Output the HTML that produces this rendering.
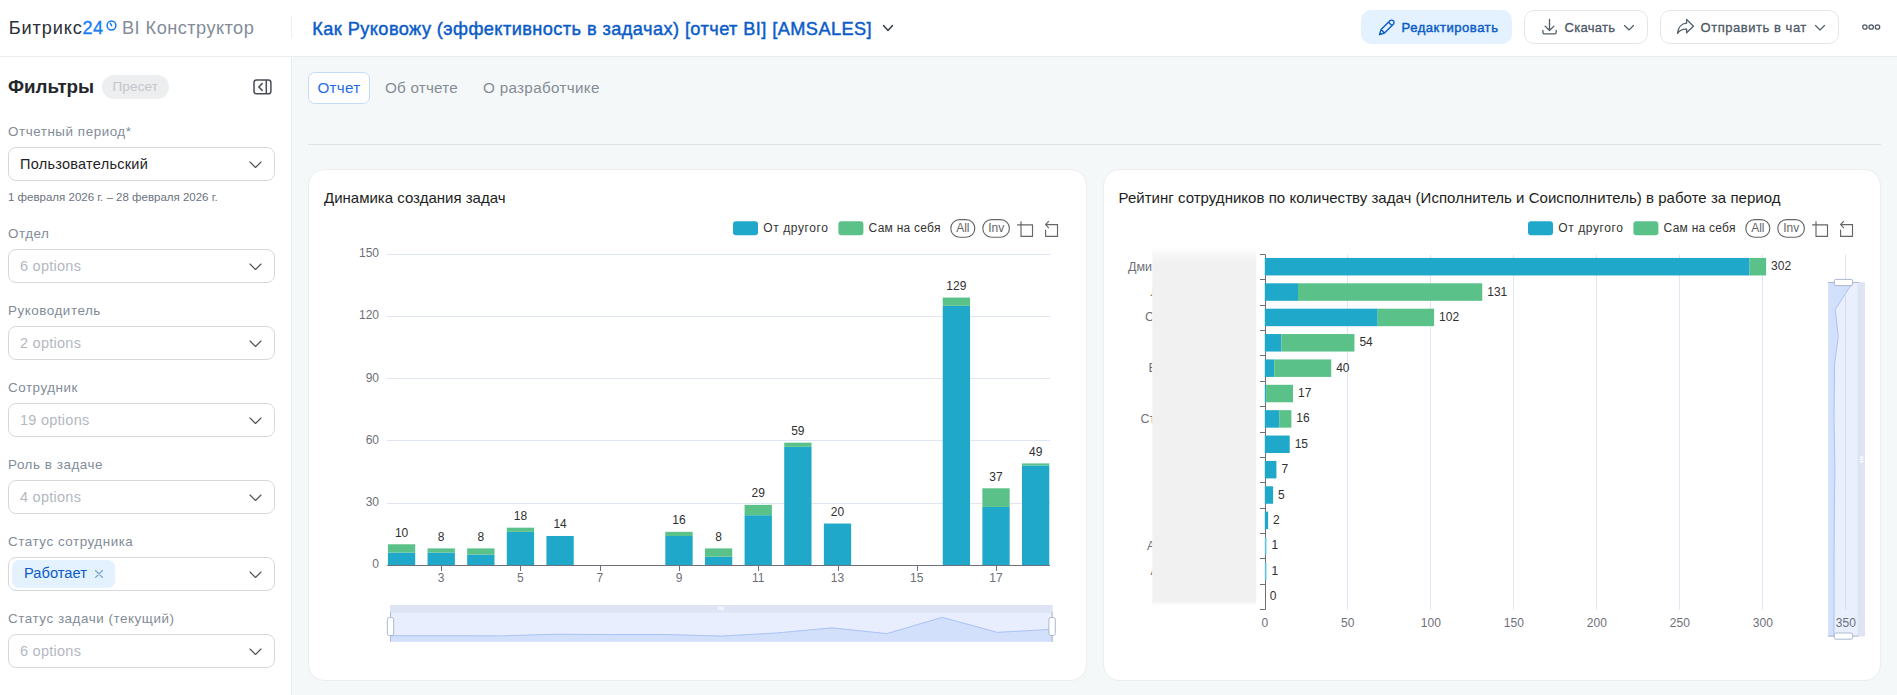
<!DOCTYPE html>
<html><head><meta charset="utf-8"><title>BI</title><style>
*{box-sizing:border-box;margin:0;padding:0}
html,body{width:1897px;height:695px;overflow:hidden;background:#f5f8f9;font-family:"Liberation Sans",sans-serif}
.abs{position:absolute}
#hdr{position:absolute;left:0;top:0;width:1897px;height:57px;background:#fff;border-bottom:1px solid #e9edf0}
#side{position:absolute;left:0;top:57px;width:292px;height:638px;background:#fff;border-right:1px solid #e9edf0}
.t{position:absolute;white-space:nowrap;line-height:1}
.lbl{position:absolute;left:8px;white-space:nowrap;font-size:13.4px;letter-spacing:.55px;color:#828c98;line-height:1;margin-top:.6px}
.sel{position:absolute;left:8px;width:267px;height:34px;border:1px solid #d5d9de;border-radius:8px;background:#fff}
.sel .v{position:absolute;left:11px;top:8.5px;font-size:14.5px;letter-spacing:.26px;line-height:1;color:#b3b8bf;white-space:nowrap}
.sel svg{position:absolute;left:239.8px;top:13.3px}
.card{position:absolute;top:169px;height:512px;width:778px;background:#fff;border:1px solid #ebedee;border-radius:16px}
.btn{position:absolute;top:10px;height:34px;border-radius:10px}
svg text{font-family:"Liberation Sans",sans-serif}
.ax{font-size:12px;fill:#6E7079}
.vl{font-size:12px;fill:#303030}
.lg{font-size:12px;fill:#333}
</style></head><body>
<div id="hdr"></div>
<div id="side"></div>
<!-- header -->
<div class="t" style="left:8.7px;top:19px;font-size:18.2px;letter-spacing:.85px;color:#2b2f36">Битрикс</div>
<div class="t" style="left:82.6px;top:19px;font-size:18.2px;letter-spacing:.3px;color:#157af5;-webkit-text-stroke:.3px #157af5">24</div>
<svg class="abs" style="left:105.5px;top:19.6px" width="11" height="11" viewBox="0 0 11 11"><circle cx="5.5" cy="5.5" r="4.4" fill="none" stroke="#157af5" stroke-width="1.5"/><path d="M5.7 5.6 L4.3 3.4" fill="none" stroke="#157af5" stroke-width="1.5" stroke-linecap="round"/></svg>
<div class="t" style="left:122px;top:19px;font-size:18.2px;letter-spacing:.45px;color:#838c98">BI Конструктор</div>
<div class="abs" style="left:291px;top:16px;width:1px;height:22px;background:#edf0f2"></div>
<div class="t" style="left:312.3px;top:20px;font-size:18.2px;letter-spacing:.42px;color:#0b5cc8;-webkit-text-stroke:.45px #0b5cc8">Как Руковожу (эффективность в задачах) [отчет BI] [AMSALES]</div>
<svg class="abs" style="left:882px;top:24px" width="12" height="9" viewBox="0 0 12 9"><path d="M1.5 1.5 L6 6.5 L10.5 1.5" fill="none" stroke="#3d434b" stroke-width="1.6" stroke-linecap="round" stroke-linejoin="round"/></svg>
<!-- buttons -->
<div class="btn" style="left:1361px;width:151px;background:#e4f1fe"></div>
<svg class="abs" style="left:1378px;top:18px" width="18" height="18" viewBox="0 0 18 18"><path d="M1.5 16.5 L3.1 11.6 L11.9 2.8 a2.4 2.4 0 0 1 3.4 0 l0 0 a2.4 2.4 0 0 1 0 3.4 L6.5 15 Z M3.1 11.6 L6.5 15 M10.5 4.2 L13.9 7.6" fill="none" stroke="#0b5cc8" stroke-width="1.4" stroke-linejoin="round" stroke-linecap="round"/></svg>
<div class="t" style="left:1401.5px;top:20.9px;font-size:13px;letter-spacing:.55px;color:#0b5cc8;-webkit-text-stroke:.45px #0b5cc8">Редактировать</div>
<div class="btn" style="left:1524px;width:124px;background:#fff;border:1px solid #e3e6e9"></div>
<svg class="abs" style="left:1541px;top:18px" width="17" height="18" viewBox="0 0 17 18"><path d="M8.5 1.3 V12.3 M4.1 8.1 L8.5 12.5 L12.9 8.1 M1.9 12.4 V14.3 a1.6 1.6 0 0 0 1.6 1.6 H13.6 a1.6 1.6 0 0 0 1.6 -1.6 V12.4" fill="none" stroke="#525c69" stroke-width="1.3" stroke-linecap="round" stroke-linejoin="round"/></svg>
<div class="t" style="left:1564.5px;top:20.9px;font-size:13px;letter-spacing:.3px;color:#4d5866;-webkit-text-stroke:.3px #4d5866">Скачать</div>
<svg class="abs" style="left:1623px;top:24px" width="12" height="8" viewBox="0 0 12 8"><path d="M1.5 1.5 L6 6 L10.5 1.5" fill="none" stroke="#525c69" stroke-width="1.15" stroke-linecap="round" stroke-linejoin="round"/></svg>
<div class="btn" style="left:1660px;width:179px;background:#fff;border:1px solid #e3e6e9"></div>
<svg class="abs" style="left:1676px;top:18px" width="19" height="18" viewBox="0 0 19 18"><path d="M10.6 1.4 L17.4 8.2 L10.6 14.8 V11.2 C6.6 11 3.6 12.2 1.5 15.4 C2 10 5.2 5.6 10.6 5.2 Z" fill="none" stroke="#525c69" stroke-width="1.3" stroke-linejoin="round"/></svg>
<div class="t" style="left:1700.5px;top:20.9px;font-size:13px;letter-spacing:.54px;color:#4d5866;-webkit-text-stroke:.3px #4d5866">Отправить в чат</div>
<svg class="abs" style="left:1814px;top:24px" width="12" height="8" viewBox="0 0 12 8"><path d="M1.5 1.5 L6 6 L10.5 1.5" fill="none" stroke="#525c69" stroke-width="1.15" stroke-linecap="round" stroke-linejoin="round"/></svg>
<svg class="abs" style="left:1861px;top:22.9px" width="20" height="8" viewBox="0 0 20 8"><g fill="none" stroke="#525c69" stroke-width="1.3"><circle cx="3.9" cy="4" r="2.2"/><circle cx="10.2" cy="4" r="2.2"/><circle cx="16.5" cy="4" r="2.2"/></g></svg>
<!-- sidebar -->
<div class="t" style="left:8px;top:77.7px;font-size:18.8px;font-weight:700;color:#23262b">Фильтры</div>
<div class="abs" style="left:102px;top:75px;width:67px;height:24px;border-radius:12px;background:#eceef0"></div>
<div class="t" style="left:112.5px;top:80px;font-size:13.5px;letter-spacing:.15px;color:#c3c7cc">Пресет</div>
<svg class="abs" style="left:252.6px;top:79px" width="20" height="16" viewBox="0 0 20 16"><rect x="1" y="1" width="16.9" height="13.8" rx="2.6" fill="none" stroke="#474d57" stroke-width="1.5"/><path d="M13.3 1 V15" stroke="#474d57" stroke-width="1.5"/><path d="M9.2 4.6 L5.8 8 L9.2 11.4" fill="none" stroke="#474d57" stroke-width="1.5" stroke-linecap="round" stroke-linejoin="round"/></svg>
<div class="lbl" style="top:124px">Отчетный период*</div>
<div class="sel" style="top:147px"><span class="v" style="color:#1f2328">Пользовательский</span><svg width="13" height="8" viewBox="0 0 13 8"><path d="M1 1 L6.5 6.5 L12 1" fill="none" stroke="#50555c" stroke-width="1.15" stroke-linecap="round" stroke-linejoin="round"/></svg></div>
<div class="t" style="left:8px;top:192px;font-size:11.5px;color:#6b7380">1 февраля 2026 г. – 28 февраля 2026 г.</div>
<div class="lbl" style="top:226px">Отдел</div>
<div class="sel" style="top:249px"><span class="v">6 options</span><svg width="13" height="8" viewBox="0 0 13 8"><path d="M1 1 L6.5 6.5 L12 1" fill="none" stroke="#50555c" stroke-width="1.15" stroke-linecap="round" stroke-linejoin="round"/></svg></div>
<div class="lbl" style="top:303px">Руководитель</div>
<div class="sel" style="top:326px"><span class="v">2 options</span><svg width="13" height="8" viewBox="0 0 13 8"><path d="M1 1 L6.5 6.5 L12 1" fill="none" stroke="#50555c" stroke-width="1.15" stroke-linecap="round" stroke-linejoin="round"/></svg></div>
<div class="lbl" style="top:380px">Сотрудник</div>
<div class="sel" style="top:403px"><span class="v">19 options</span><svg width="13" height="8" viewBox="0 0 13 8"><path d="M1 1 L6.5 6.5 L12 1" fill="none" stroke="#50555c" stroke-width="1.15" stroke-linecap="round" stroke-linejoin="round"/></svg></div>
<div class="lbl" style="top:457px">Роль в задаче</div>
<div class="sel" style="top:480px"><span class="v">4 options</span><svg width="13" height="8" viewBox="0 0 13 8"><path d="M1 1 L6.5 6.5 L12 1" fill="none" stroke="#50555c" stroke-width="1.15" stroke-linecap="round" stroke-linejoin="round"/></svg></div>
<div class="lbl" style="top:534px">Статус сотрудника</div>
<div class="sel" style="top:557px"><span class="v"></span><svg width="13" height="8" viewBox="0 0 13 8"><path d="M1 1 L6.5 6.5 L12 1" fill="none" stroke="#50555c" stroke-width="1.15" stroke-linecap="round" stroke-linejoin="round"/></svg></div>
<div class="abs" style="left:12px;top:560px;width:103px;height:28px;border-radius:7px;background:#e4f1fe"></div>
<div class="t" style="left:24px;top:566px;font-size:14.7px;color:#0b5cc8">Работает</div>
<svg class="abs" style="left:94px;top:569px" width="10" height="10" viewBox="0 0 10 10"><path d="M1.5 1.5 L8.5 8.5 M8.5 1.5 L1.5 8.5" stroke="#74a3cc" stroke-width="1.1" stroke-linecap="round"/></svg>
<div class="lbl" style="top:611px">Статус задачи (текущий)</div>
<div class="sel" style="top:634px"><span class="v">6 options</span><svg width="13" height="8" viewBox="0 0 13 8"><path d="M1 1 L6.5 6.5 L12 1" fill="none" stroke="#50555c" stroke-width="1.15" stroke-linecap="round" stroke-linejoin="round"/></svg></div>
<!-- tabs -->
<div class="abs" style="left:308px;top:72px;width:62px;height:32px;border:1px solid #c3dcfb;border-radius:7px;background:#fff"></div>
<div class="t" style="left:317.5px;top:80px;font-size:15.2px;letter-spacing:.28px;color:#1f6be8">Отчет</div>
<div class="t" style="left:385px;top:80px;font-size:15.2px;letter-spacing:.22px;color:#858c96">Об отчете</div>
<div class="t" style="left:483px;top:80px;font-size:15.2px;letter-spacing:.33px;color:#858c96">О разработчике</div>
<div class="abs" style="left:308px;top:144px;width:1573px;height:1px;background:#dfe3e7"></div>
<!-- cards -->
<div class="card" style="left:308px;width:779px"></div>
<div class="card" style="left:1103px"></div>
<div class="t" style="left:324px;top:190px;font-size:15px;color:#1c1e21">Динамика создания задач</div>
<div class="t" style="left:1118.5px;top:190px;font-size:15px;letter-spacing:.03px;color:#1c1e21">Рейтинг сотрудников по количеству задач (Исполнитель и Соисполнитель) в работе за период</div>
<svg class="abs" style="left:0;top:0" width="1897" height="695" viewBox="0 0 1897 695">
<defs><filter id="bl" x="-10%" y="-10%" width="120%" height="120%"><feGaussianBlur stdDeviation="3"/></filter>
<clipPath id="nc"><rect x="1100" y="240" width="52.3" height="380"/></clipPath>
<linearGradient id="bg1" x1="0" y1="0" x2="0" y2="1"><stop offset="0" stop-color="#f1f1f2" stop-opacity="0"/><stop offset="0.045" stop-color="#f1f1f2" stop-opacity="1"/><stop offset="0.985" stop-color="#f1f1f2" stop-opacity="1"/><stop offset="1" stop-color="#f1f1f2" stop-opacity="0"/></linearGradient></defs>
<line x1="387.2" y1="503.5" x2="1050.0" y2="503.5" stroke="#E0E6F1" stroke-width="1"/>
<line x1="387.2" y1="440.5" x2="1050.0" y2="440.5" stroke="#E0E6F1" stroke-width="1"/>
<line x1="387.2" y1="378.5" x2="1050.0" y2="378.5" stroke="#E0E6F1" stroke-width="1"/>
<line x1="387.2" y1="316.5" x2="1050.0" y2="316.5" stroke="#E0E6F1" stroke-width="1"/>
<line x1="387.2" y1="254.5" x2="1050.0" y2="254.5" stroke="#E0E6F1" stroke-width="1"/>
<text x="379" y="568" text-anchor="end" class="ax">0</text>
<text x="379" y="506" text-anchor="end" class="ax">30</text>
<text x="379" y="444" text-anchor="end" class="ax">60</text>
<text x="379" y="382" text-anchor="end" class="ax">90</text>
<text x="379" y="319" text-anchor="end" class="ax">120</text>
<text x="379" y="257" text-anchor="end" class="ax">150</text>
<rect x="387.92" y="552.56" width="27.3" height="12.44" fill="#1FA8C9"/>
<rect x="387.92" y="544.27" width="27.3" height="8.29" fill="#5AC189"/>
<text x="401.57" y="536.67" text-anchor="middle" class="vl">10</text>
<rect x="427.55" y="552.56" width="27.3" height="12.44" fill="#1FA8C9"/>
<rect x="427.55" y="548.41" width="27.3" height="4.15" fill="#5AC189"/>
<text x="441.2" y="540.81" text-anchor="middle" class="vl">8</text>
<rect x="467.18" y="554.63" width="27.3" height="10.37" fill="#1FA8C9"/>
<rect x="467.18" y="548.41" width="27.3" height="6.22" fill="#5AC189"/>
<text x="480.83" y="540.81" text-anchor="middle" class="vl">8</text>
<rect x="506.81" y="531.83" width="27.3" height="33.17" fill="#1FA8C9"/>
<rect x="506.81" y="527.68" width="27.3" height="4.15" fill="#5AC189"/>
<text x="520.46" y="520.08" text-anchor="middle" class="vl">18</text>
<rect x="546.44" y="535.97" width="27.3" height="29.03" fill="#1FA8C9"/>
<text x="560.09" y="528.37" text-anchor="middle" class="vl">14</text>
<rect x="665.33" y="535.97" width="27.3" height="29.03" fill="#1FA8C9"/>
<rect x="665.33" y="531.83" width="27.3" height="4.15" fill="#5AC189"/>
<text x="678.98" y="524.23" text-anchor="middle" class="vl">16</text>
<rect x="704.96" y="556.71" width="27.3" height="8.29" fill="#1FA8C9"/>
<rect x="704.96" y="548.41" width="27.3" height="8.29" fill="#5AC189"/>
<text x="718.61" y="540.81" text-anchor="middle" class="vl">8</text>
<rect x="744.59" y="515.24" width="27.3" height="49.76" fill="#1FA8C9"/>
<rect x="744.59" y="504.87" width="27.3" height="10.37" fill="#5AC189"/>
<text x="758.24" y="497.27" text-anchor="middle" class="vl">29</text>
<rect x="784.22" y="446.82" width="27.3" height="118.18" fill="#1FA8C9"/>
<rect x="784.22" y="442.67" width="27.3" height="4.15" fill="#5AC189"/>
<text x="797.87" y="435.07" text-anchor="middle" class="vl">59</text>
<rect x="823.85" y="523.53" width="27.3" height="41.47" fill="#1FA8C9"/>
<text x="837.5" y="515.93" text-anchor="middle" class="vl">20</text>
<rect x="942.74" y="305.83" width="27.3" height="259.17" fill="#1FA8C9"/>
<rect x="942.74" y="297.54" width="27.3" height="8.29" fill="#5AC189"/>
<text x="956.39" y="289.94" text-anchor="middle" class="vl">129</text>
<rect x="982.37" y="506.95" width="27.3" height="58.05" fill="#1FA8C9"/>
<rect x="982.37" y="488.29" width="27.3" height="18.66" fill="#5AC189"/>
<text x="996.02" y="480.69" text-anchor="middle" class="vl">37</text>
<rect x="1022" y="465.48" width="27.3" height="99.52" fill="#1FA8C9"/>
<rect x="1022" y="463.41" width="27.3" height="2.07" fill="#5AC189"/>
<text x="1035.65" y="455.81" text-anchor="middle" class="vl">49</text>
<line x1="387.2" y1="565.5" x2="1050.0" y2="565.5" stroke="#6E7079" stroke-width="1"/>
<line x1="441.5" y1="565.5" x2="441.5" y2="571" stroke="#6E7079" stroke-width="1"/>
<text x="441.2" y="582" text-anchor="middle" class="ax">3</text>
<line x1="520.5" y1="565.5" x2="520.5" y2="571" stroke="#6E7079" stroke-width="1"/>
<text x="520.46" y="582" text-anchor="middle" class="ax">5</text>
<line x1="600.5" y1="565.5" x2="600.5" y2="571" stroke="#6E7079" stroke-width="1"/>
<text x="599.72" y="582" text-anchor="middle" class="ax">7</text>
<line x1="679.5" y1="565.5" x2="679.5" y2="571" stroke="#6E7079" stroke-width="1"/>
<text x="678.98" y="582" text-anchor="middle" class="ax">9</text>
<line x1="758.5" y1="565.5" x2="758.5" y2="571" stroke="#6E7079" stroke-width="1"/>
<text x="758.24" y="582" text-anchor="middle" class="ax">11</text>
<line x1="838.5" y1="565.5" x2="838.5" y2="571" stroke="#6E7079" stroke-width="1"/>
<text x="837.5" y="582" text-anchor="middle" class="ax">13</text>
<line x1="917.5" y1="565.5" x2="917.5" y2="571" stroke="#6E7079" stroke-width="1"/>
<text x="916.76" y="582" text-anchor="middle" class="ax">15</text>
<line x1="996.5" y1="565.5" x2="996.5" y2="571" stroke="#6E7079" stroke-width="1"/>
<text x="996.02" y="582" text-anchor="middle" class="ax">17</text>
<rect x="390.0" y="605" width="662.6" height="6.7" fill="#DEE4F3"/>
<rect x="390.0" y="611.7" width="662.6" height="30" fill="#E8EEFD"/>
<polygon points="390.0,641.7 390,635.77 445.22,635.77 500.43,635.92 555.65,634.22 610.87,634.53 666.08,634.53 721.3,636.08 776.52,632.98 831.73,627.86 886.95,633.6 942.17,617.33 997.38,632.36 1052.6,629.26 1052.6,641.7" fill="#D3E0FB"/>
<polyline points="390,635.77 445.22,635.77 500.43,635.92 555.65,634.22 610.87,634.53 666.08,634.53 721.3,636.08 776.52,632.98 831.73,627.86 886.95,633.6 942.17,617.33 997.38,632.36 1052.6,629.26" fill="none" stroke="#A9C2F8" stroke-width="1"/>
<line x1="390.0" y1="612" x2="1052.6" y2="612" stroke="#D6DEF0" stroke-width="1"/>
<line x1="390.5" y1="611.7" x2="390.5" y2="641.7" stroke="#ACB8D1" stroke-width="1"/>
<rect x="387.3" y="617.5" width="6.4" height="18" rx="2" fill="#fff" stroke="#ACB8D1" stroke-width="1"/>
<line x1="1052.1" y1="611.7" x2="1052.1" y2="641.7" stroke="#ACB8D1" stroke-width="1"/>
<rect x="1048.9" y="617.5" width="6.4" height="18" rx="2" fill="#fff" stroke="#ACB8D1" stroke-width="1"/>
<rect x="718" y="606.7" width="1.3" height="3.4" fill="#fff"/>
<rect x="720.3" y="606.7" width="1.3" height="3.4" fill="#fff"/>
<rect x="722.6" y="606.7" width="1.3" height="3.4" fill="#fff"/>
<rect x="733" y="221.3" width="25" height="14" rx="3" fill="#1FA8C9"/>
<text x="763.3" y="232.3" class="lg" textLength="64.6" lengthAdjust="spacing">От другого</text>
<rect x="838.4" y="221.3" width="25" height="14" rx="3" fill="#5AC189"/>
<text x="868.6" y="232.3" class="lg" textLength="71.8" lengthAdjust="spacing">Сам на себя</text>
<rect x="950.8" y="219.6" width="24" height="17.6" rx="8.8" fill="#fff" stroke="#666" stroke-width="1.15"/>
<text x="962.8" y="232" text-anchor="middle" class="lg" style="fill:#666">All</text>
<rect x="982.8" y="219.6" width="26.6" height="17.6" rx="8.8" fill="#fff" stroke="#666" stroke-width="1.15"/>
<text x="996.2" y="232" text-anchor="middle" class="lg" style="fill:#666">Inv</text>
<path d="M1021 221.3 V236.3 H1032.5 V224.9 H1017.1" fill="none" stroke="#666" stroke-width="1.15"/>
<path d="M1048.8 221.2 L1045.6 224.6 L1048.8 228.1 M1045.6 224.6 H1057.5 V236.3 H1045.6 V229.8" fill="none" stroke="#666" stroke-width="1.15"/>
<line x1="1347.5" y1="254.5" x2="1347.5" y2="609.7" stroke="#E0E6F1" stroke-width="1"/>
<line x1="1430.5" y1="254.5" x2="1430.5" y2="609.7" stroke="#E0E6F1" stroke-width="1"/>
<line x1="1513.5" y1="254.5" x2="1513.5" y2="609.7" stroke="#E0E6F1" stroke-width="1"/>
<line x1="1596.5" y1="254.5" x2="1596.5" y2="609.7" stroke="#E0E6F1" stroke-width="1"/>
<line x1="1679.5" y1="254.5" x2="1679.5" y2="609.7" stroke="#E0E6F1" stroke-width="1"/>
<line x1="1762.5" y1="254.5" x2="1762.5" y2="609.7" stroke="#E0E6F1" stroke-width="1"/>
<line x1="1845.5" y1="254.5" x2="1845.5" y2="609.7" stroke="#E0E6F1" stroke-width="1"/>
<rect x="1858.7" y="282.2" width="6.3" height="354.2" fill="#DEE4F3"/>
<rect x="1828.2" y="282.2" width="30.5" height="354.2" fill="#E8EEFD" fill-opacity="0.92"/>
<polygon points="1828.2,282.2 1852.98,282.2 1835.22,309.45 1838.29,336.69 1834.57,363.94 1834.31,391.18 1833.98,418.43 1834.51,445.68 1834.9,472.92 1834.38,500.17 1834.25,527.42 1834.05,554.66 1833.98,581.91 1833.98,609.15 1833.92,636.4 1828.2,636.4" fill="#D3E0FB"/>
<polyline points="1852.98,282.2 1835.22,309.45 1838.29,336.69 1834.57,363.94 1834.31,391.18 1833.98,418.43 1834.51,445.68 1834.9,472.92 1834.38,500.17 1834.25,527.42 1834.05,554.66 1833.98,581.91 1833.98,609.15 1833.92,636.4" fill="none" stroke="#A9C2F8" stroke-width="1"/>
<line x1="1845.5" y1="282.2" x2="1845.5" y2="609.7" stroke="#D2DCF5" stroke-width="1"/>
<line x1="1858.2" y1="282.2" x2="1858.2" y2="636.4" stroke="#D6DEF0" stroke-width="1"/>
<line x1="1828.2" y1="282.5" x2="1858.7" y2="282.5" stroke="#ACB8D1" stroke-width="1"/>
<rect x="1834.3" y="279.4" width="18.3" height="6.2" rx="1.5" fill="#fff" stroke="#ACB8D1" stroke-width="1"/>
<line x1="1828.2" y1="636.1" x2="1858.7" y2="636.1" stroke="#ACB8D1" stroke-width="1"/>
<rect x="1834.3" y="633" width="18.3" height="6.2" rx="1.5" fill="#fff" stroke="#ACB8D1" stroke-width="1"/>
<rect x="1860" y="456.5" width="3.4" height="1.3" fill="#fff"/>
<rect x="1860" y="458.8" width="3.4" height="1.3" fill="#fff"/>
<rect x="1860" y="461.1" width="3.4" height="1.3" fill="#fff"/>
<text x="1264.8" y="627" text-anchor="middle" class="ax">0</text>
<text x="1347.8" y="627" text-anchor="middle" class="ax">50</text>
<text x="1430.8" y="627" text-anchor="middle" class="ax">100</text>
<text x="1513.8" y="627" text-anchor="middle" class="ax">150</text>
<text x="1596.8" y="627" text-anchor="middle" class="ax">200</text>
<text x="1679.8" y="627" text-anchor="middle" class="ax">250</text>
<text x="1762.8" y="627" text-anchor="middle" class="ax">300</text>
<text x="1845.8" y="627" text-anchor="middle" class="ax">350</text>
<line x1="1265.5" y1="254.5" x2="1265.5" y2="609.7" stroke="#6E7079" stroke-width="1"/>
<line x1="1260" y1="254.5" x2="1265.5" y2="254.5" stroke="#6E7079" stroke-width="1"/>
<line x1="1260" y1="279.5" x2="1265.5" y2="279.5" stroke="#6E7079" stroke-width="1"/>
<line x1="1260" y1="305.5" x2="1265.5" y2="305.5" stroke="#6E7079" stroke-width="1"/>
<line x1="1260" y1="330.5" x2="1265.5" y2="330.5" stroke="#6E7079" stroke-width="1"/>
<line x1="1260" y1="355.5" x2="1265.5" y2="355.5" stroke="#6E7079" stroke-width="1"/>
<line x1="1260" y1="381.5" x2="1265.5" y2="381.5" stroke="#6E7079" stroke-width="1"/>
<line x1="1260" y1="406.5" x2="1265.5" y2="406.5" stroke="#6E7079" stroke-width="1"/>
<line x1="1260" y1="432.5" x2="1265.5" y2="432.5" stroke="#6E7079" stroke-width="1"/>
<line x1="1260" y1="457.5" x2="1265.5" y2="457.5" stroke="#6E7079" stroke-width="1"/>
<line x1="1260" y1="482.5" x2="1265.5" y2="482.5" stroke="#6E7079" stroke-width="1"/>
<line x1="1260" y1="508.5" x2="1265.5" y2="508.5" stroke="#6E7079" stroke-width="1"/>
<line x1="1260" y1="533.5" x2="1265.5" y2="533.5" stroke="#6E7079" stroke-width="1"/>
<line x1="1260" y1="558.5" x2="1265.5" y2="558.5" stroke="#6E7079" stroke-width="1"/>
<line x1="1260" y1="584.5" x2="1265.5" y2="584.5" stroke="#6E7079" stroke-width="1"/>
<line x1="1260" y1="609.5" x2="1265.5" y2="609.5" stroke="#6E7079" stroke-width="1"/>
<rect x="1264.8" y="257.94" width="484.72" height="17.5" fill="#1FA8C9"/>
<rect x="1749.52" y="257.94" width="16.6" height="17.5" fill="#5AC189"/>
<text x="1771.12" y="270.19" class="vl">302</text>
<rect x="1264.8" y="283.31" width="33.2" height="17.5" fill="#1FA8C9"/>
<rect x="1298" y="283.31" width="184.26" height="17.5" fill="#5AC189"/>
<text x="1487.26" y="295.56" class="vl">131</text>
<rect x="1264.8" y="308.68" width="112.88" height="17.5" fill="#1FA8C9"/>
<rect x="1377.68" y="308.68" width="56.44" height="17.5" fill="#5AC189"/>
<text x="1439.12" y="320.93" class="vl">102</text>
<rect x="1264.8" y="334.05" width="16.6" height="17.5" fill="#1FA8C9"/>
<rect x="1281.4" y="334.05" width="73.04" height="17.5" fill="#5AC189"/>
<text x="1359.44" y="346.3" class="vl">54</text>
<rect x="1264.8" y="359.42" width="9.46" height="17.5" fill="#1FA8C9"/>
<rect x="1274.26" y="359.42" width="56.94" height="17.5" fill="#5AC189"/>
<text x="1336.2" y="371.67" class="vl">40</text>
<rect x="1264.8" y="384.79" width="1.33" height="17.5" fill="#1FA8C9"/>
<rect x="1266.13" y="384.79" width="26.89" height="17.5" fill="#5AC189"/>
<text x="1298.02" y="397.04" class="vl">17</text>
<rect x="1264.8" y="410.16" width="14.44" height="17.5" fill="#1FA8C9"/>
<rect x="1279.24" y="410.16" width="12.12" height="17.5" fill="#5AC189"/>
<text x="1296.36" y="422.41" class="vl">16</text>
<rect x="1264.8" y="435.54" width="24.9" height="17.5" fill="#1FA8C9"/>
<text x="1294.7" y="447.79" class="vl">15</text>
<rect x="1264.8" y="460.91" width="11.62" height="17.5" fill="#1FA8C9"/>
<text x="1281.42" y="473.16" class="vl">7</text>
<rect x="1264.8" y="486.28" width="8.3" height="17.5" fill="#1FA8C9"/>
<text x="1278.1" y="498.53" class="vl">5</text>
<rect x="1264.8" y="511.65" width="3.32" height="17.5" fill="#1FA8C9"/>
<text x="1273.12" y="523.9" class="vl">2</text>
<rect x="1264.8" y="537.02" width="1.66" height="17.5" fill="#5FC4DC"/>
<text x="1271.46" y="549.27" class="vl">1</text>
<rect x="1264.8" y="562.39" width="1.66" height="17.5" fill="#5FC4DC"/>
<text x="1271.46" y="574.64" class="vl">1</text>
<text x="1269.8" y="600.01" class="vl">0</text>
<g clip-path="url(#nc)">
<text x="1128" y="270.69" class="ax" style="font-size:12.5px">Дмитрий</text>
<text x="1150.4" y="296.06" class="ax" style="font-size:12.5px">Лариса</text>
<text x="1145" y="321.43" class="ax" style="font-size:12.5px">Сергей</text>
<text x="1148.5" y="372.17" class="ax" style="font-size:12.5px">Елена</text>
<text x="1140.5" y="422.91" class="ax" style="font-size:12.5px">Станислав</text>
<text x="1147" y="549.77" class="ax" style="font-size:12.5px">Александр</text>
<text x="1150.6" y="575.14" class="ax" style="font-size:12.5px">Алексей</text>
</g>
<rect x="1528" y="221.3" width="25" height="14" rx="3" fill="#1FA8C9"/>
<text x="1558.3" y="232.3" class="lg" textLength="64.6" lengthAdjust="spacing">От другого</text>
<rect x="1633.4" y="221.3" width="25" height="14" rx="3" fill="#5AC189"/>
<text x="1663.6" y="232.3" class="lg" textLength="71.8" lengthAdjust="spacing">Сам на себя</text>
<rect x="1745.8" y="219.6" width="24" height="17.6" rx="8.8" fill="#fff" stroke="#666" stroke-width="1.15"/>
<text x="1757.8" y="232" text-anchor="middle" class="lg" style="fill:#666">All</text>
<rect x="1777.8" y="219.6" width="26.6" height="17.6" rx="8.8" fill="#fff" stroke="#666" stroke-width="1.15"/>
<text x="1791.2" y="232" text-anchor="middle" class="lg" style="fill:#666">Inv</text>
<path d="M1816 221.3 V236.3 H1827.5 V224.9 H1812.1" fill="none" stroke="#666" stroke-width="1.15"/>
<path d="M1843.8 221.2 L1840.6 224.6 L1843.8 228.1 M1840.6 224.6 H1852.5 V236.3 H1840.6 V229.8" fill="none" stroke="#666" stroke-width="1.15"/>
<rect x="1152.3" y="246" width="104" height="360" fill="url(#bg1)"/>
</svg>
</body></html>
